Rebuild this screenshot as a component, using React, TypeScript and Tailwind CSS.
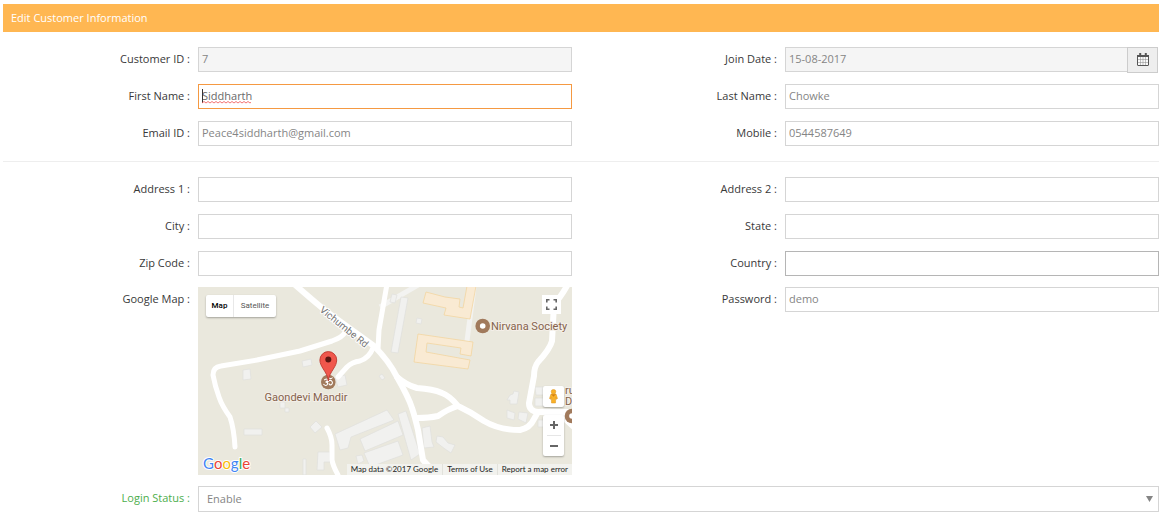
import React from "react";

const GRID = "grid grid-cols-[1fr_2fr_2px_1fr_2fr] items-start gap-x-2 gap-y-3";
const INPUT =
  "block h-[25px] w-full min-w-0 border border-[#d5d5d5] bg-white px-[3px] pb-0.5 text-[#858585] outline-none focus:border-[#f59942] focus:text-[#696969]";

function Label({ id, children, right, green }: { id: string; children: React.ReactNode; right?: boolean; green?: boolean }) {
  return (
    <label
      htmlFor={id}
      className={`h-[25px] text-right leading-[23px] whitespace-nowrap ${right ? "col-start-4" : "col-start-1"} ${green ? "text-[#4cae4c]" : "text-[#393939]"}`}
    >
      {children} :
    </label>
  );
}

function Field({ id, label, value = "", right, className = "", disabled }: {
  id: string; label: string; value?: string; right?: boolean; className?: string; disabled?: boolean;
}) {
  return (
    <>
      <Label id={id} right={right}>{label}</Label>
      <input id={id} type="text" defaultValue={value} readOnly={disabled} className={`${INPUT} ${disabled ? "bg-[#f5f5f5]!" : ""} ${className}`} />
    </>
  );
}

function CalendarIcon() {
  return (
    <svg width="12" height="13" viewBox="0 0 12 13" fill="none" stroke="#555" aria-hidden="true">
      <rect x="0.5" y="2.5" width="11" height="10" rx="0.5" fill="#fafafa" />
      <path d="M0 3h12" strokeWidth="2" />
      <path d="M3.2 0v3M8.8 0v3" strokeWidth="2" />
      <path d="M3.5 4v8M6 4v8M8.5 4v8M1 6.5h10M1 9.5h10" strokeWidth="0.5" stroke="#888" />
    </svg>
  );
}

function MapDrawing() {
  return (
    <svg className="absolute inset-0 h-full w-full" viewBox="0 0 374 188" preserveAspectRatio="xMidYMid slice" fontFamily="Roboto, sans-serif" aria-hidden="true">
      <rect width="374" height="188" fill="#eae8dd" />
      <path d="M182 20L220 -2M276 0L269 54" fill="none" stroke="#f3f3f1" strokeWidth="5" />
      <g fill="#f1f1ef" stroke="#e0e0dc" strokeWidth="0.7">
        <path d="M203 10l7 1-10 55-7-1zM194 7l5 1-2 8-5-1zM219 31l5 1-1 5-5-1z" />
        <path d="M104 74l9-2 1 6-9 2zM45 83l7-1 1 10-8 1zM82 115h5v6h-5zM87 121h4v4h-4zM46 142h18v6H46zM118 134l6 6-7 6-5-6zM137 90l10-2 2 10-9 2zM184 87l3 4-3 2-3-4z" />
        <path d="M137 147l52-24 7 10-43 17-3 11-8 2zM162 152l38-18 5 14-38 16zM166 166l34-12 5 14-33 12zM200 127l8-3 14 43-9 6zM158 169l6-1 2 6-6 3zM120 165h12v10h-6v8h-7zM105 172h3v16h-3zM224 141l8-2 2 16 2 5-10 1zM239 149l6 1 5 6 7 2-4 8-6-4-9-7z" />
        <path d="M312 108l3-1 1-3 5 1-2 12h-7v-4h-3zM309 123l8 3-1 7-7-2zM321 125l9 1-2 10-8-4zM337 100h9v8h-8zM337 111h10v8h-10zM340 133h6v7h-6z" />
      </g>
      <g fill="#f9ead3" stroke="#f3d5a1" strokeWidth="0.8">
        <path d="M228 5l19 5 15 2-1 8 4 1 4-22h9l-6 33-26-4 2-7-23-5zM220 47l55 8-2 14-11-2 1-6-34-5-1 9 44 8-2 9-54-7z" />
      </g>
      <g fill="none" stroke="#fff" strokeLinecap="round" strokeLinejoin="round">
        <path d="M95 -4Q112 11 129 25L176 59Q191 74 199 90Q211 111 214 121Q217 130 220 143L225 173Q230 179 239 187" strokeWidth="6" />
        <path d="M147 45Q145 50 134 54L102 64L59 73L23 79Q15 80 15 88Q17 99 21 110Q24 119 32 130Q36 142 37 160M189 -3L181 43L180 62M140 90L149 80Q154 75 162 74Q171 71 175 61M129 141Q134 150 134 158V173Q135 179 140 188" strokeWidth="5" />
        <path d="M199 90Q208 98 219 101Q235 102 244 106Q252 109 260 119Q273 125 286 134Q301 143 322 143Q332 141 336 132L340 125Q354 123 363 128L376 140M260 119Q250 122 240 129Q231 131 219 131M370 -3Q363 10 356 17L354 54Q352 62 340 75Q336 80 336 89L331 116Q331 124 340 125H376" strokeWidth="6" />
      </g>
      <g stroke="#fff" strokeWidth="2" paintOrder="stroke" strokeLinejoin="round">
        <text x="121" y="24" transform="rotate(39 121 24)" fill="#777" fontSize="10">Vichumbe Rd</text>
        <g fill="#85634c" fontSize="11" stroke="#f4efe8">
          <text x="108" y="114" textAnchor="middle">Gaondevi Mandir</text>
          <text x="293" y="43">Nirvana Society</text>
          <text x="367" y="107">ru</text>
          <text x="367" y="118">D</text>
        </g>
      </g>
      <g fill="#a17a5c">
        <circle cx="130.3" cy="95" r="7.3" />
        <circle cx="284.7" cy="39" r="7.3" />
        <circle cx="374" cy="129" r="7.3" />
      </g>
      <circle cx="284.7" cy="39" r="2.8" fill="#fff" />
      <circle cx="374" cy="129" r="2.8" fill="#fff" />
      <path d="M126.2 93q3-2 3.2 0q0 2-2 2q2.500 0 2.200 2q-1.500 3-4.200 0M129.500 95q2-2.500 4-1.200q2 2-.2 4q-2 .5-2.300-1.500M131 91q2 1.500 3.500-.5" fill="none" stroke="#fff" strokeWidth="1.1" />
      <path d="M130.300 94c-.5-5-2.500-8-5-12-2-3.200-3.400-5.700-3.400-9a8.400 8.400 0 0 1 16.800 0c0 3.300-1.400 5.800-3.400 9-2.500 4-4.500 7-5 12z" fill="#f0574c" stroke="#bd3a31" strokeWidth="0.9" />
      <circle cx="130.300" cy="72.500" r="3" fill="#5c1611" />
    </svg>
  );
}

function GoogleMap() {
  const shadow = "absolute rounded-xs bg-white shadow-[0_1px_2px_rgba(0,0,0,0.3)]";
  return (
    <div id="map" role="group" aria-label="Google Map" className="relative h-[188px] overflow-hidden font-[Roboto,sans-serif]">
      <MapDrawing />
      <div className={`${shadow} top-2 left-2 flex h-[22px] text-[8px]`}>
        <button type="button" className="w-7 border-r border-[#e8e8e8] font-medium text-black">Map</button>
        <button type="button" className="w-[42px] text-[#565656]">Satellite</button>
      </div>
      <button type="button" aria-label="Toggle fullscreen" className="absolute top-2 right-[11px] flex size-[19px] items-center justify-center bg-white">
        <svg width="11" height="11" viewBox="0 0 11 11" fill="none" stroke="#666" strokeWidth="1.600"><path d="M.8 3.500V.8h2.700M7.500.8h2.700v2.700M10.200 7.500v2.700H7.500M3.500 10.200H.8V7.500" /></svg>
      </button>
      <button type="button" aria-label="Street View" className={`${shadow} right-2 bottom-[68px] flex size-[21px] items-center justify-center`}>
        <svg width="9" height="15" viewBox="0 0 9 15" fill="#f9b127" stroke="#d9901a" strokeWidth="0.5"><path d="M2 5h5l1.500 4.500-1.200.8-.6-1.800L6.500 14h-4l-.2-5.500-.6 1.800-1.200-.8z" /><path d="M2.500 5.500h4L4.500 7.500z" fill="#d87b16" /><circle cx="4.500" cy="2.700" r="2.300" /></svg>
      </button>
      <div className={`${shadow} right-2 bottom-[19px] flex w-[21px] flex-col items-center`}>
        <button type="button" aria-label="Zoom in" className="flex h-5 w-full items-center justify-center"><svg width="8" height="8" viewBox="0 0 8 8" stroke="#666" strokeWidth="2"><path d="M0 4h8M4 0v8" /></svg></button>
        <div className="h-px w-3.5 bg-[#e6e6e6]" />
        <button type="button" aria-label="Zoom out" className="flex h-5 w-full items-center justify-center"><svg width="8" height="8" viewBox="0 0 8 8" stroke="#666" strokeWidth="2"><path d="M0 4h8" /></svg></button>
      </div>
      <svg className="absolute bottom-0 left-1" width="54" height="22" viewBox="0 0 54 22" aria-label="Google">
        <text x="1" y="16" fontFamily="Lato, sans-serif" fontSize="15" fontWeight="400" stroke="#fff" strokeWidth="2" strokeLinejoin="round" paintOrder="stroke">
          <tspan fill="#4285f4">G</tspan><tspan fill="#ea4335">o</tspan><tspan fill="#fbbc05">o</tspan><tspan fill="#4285f4">g</tspan><tspan fill="#34a853">l</tspan><tspan fill="#ea4335">e</tspan>
        </text>
      </svg>
      <div className="absolute right-0 bottom-0 flex h-[11px] bg-[#f2f2ee] font-[Lato,sans-serif] text-[8px] leading-[11px] whitespace-nowrap text-[#222]">
        <span className="px-1">Map data ©2017 Google</span>
        <a href="#terms" className="border-l border-[#e2e2dc] px-1">Terms of Use</a>
        <a href="#report" className="border-l border-[#e2e2dc] px-1">Report a map error</a>
      </div>
    </div>
  );
}

export default function App() {
  return (
    <main className="min-h-screen bg-white pt-1 pr-2 pl-[3px] font-['Open_Sans',sans-serif] text-[11px]">
      <h1 className="h-7 bg-[#ffb752] px-2 leading-7 text-white">Edit Customer Information</h1>
      <form onSubmit={(e) => e.preventDefault()}>
        <div className={`${GRID} mt-[15px]`}>
          <Field id="cid" label="Customer ID" value="7" disabled />
          <Label id="join" right>Join Date</Label>
          <div className="flex h-[25px] items-start pr-px">
            <input id="join" type="text" readOnly defaultValue="15-08-2017" className={`${INPUT} flex-1 bg-[#f5f5f5]!`} />
            <button type="button" aria-label="Pick a date" className="-ml-px flex h-[26px] w-[31px] shrink-0 items-center justify-center border border-[#ccc] bg-[#eee] pb-0.5"><CalendarIcon /></button>
          </div>
          <Label id="first">First Name</Label>
          <div className="relative">
            <input id="first" type="text" spellCheck={false} defaultValue="Siddharth" className={`${INPUT} border-[#f59942]! text-[#696969]!`} />
            <span className="absolute top-[5px] left-1 h-3.5 w-px bg-[#333]" />
            <svg className="pointer-events-none absolute top-[17px] left-1" width="49" height="3" aria-hidden="true">
              <defs><pattern id="squiggle" width="4" height="3" patternUnits="userSpaceOnUse"><path d="M0 2L2 .5L4 2" fill="none" stroke="#f05050" strokeWidth="0.8" /></pattern></defs>
              <rect width="49" height="3" fill="url(#squiggle)" />
            </svg>
          </div>
          <Field id="last" label="Last Name" value="Chowke" right />
          <Field id="email" label="Email ID" value="Peace4siddharth@gmail.com" />
          <Field id="mobile" label="Mobile" value="0544587649" right />
        </div>
        <hr className="mt-[15px] mb-[15px] border-[#eee]" />
        <div className={GRID}>
          <Field id="a1" label="Address 1" />
          <Field id="a2" label="Address 2" right />
          <Field id="city" label="City" />
          <Field id="state" label="State" right />
          <Field id="zip" label="Zip Code" />
          <Field id="country" label="Country" right className="border-[#b5b5b5]!" />
        </div>
        <div className={`${GRID} mt-[11px]`}>
          <Label id="map">Google Map</Label>
          <GoogleMap />
          <Field id="password" label="Password" value="demo" right />
        </div>
        <div className={`${GRID} mt-[11px]`}>
          <Label id="status" green>Login Status</Label>
          <div className="relative col-span-4">
            <select id="status" className="block h-[26px] w-full appearance-none border border-[#d5d5d5] bg-white px-2 text-[#858585] outline-none">
              <option>Enable</option>
              <option>Disable</option>
            </select>
            <svg className="pointer-events-none absolute top-[10px] right-[6px]" width="7" height="6" viewBox="0 0 7 6" fill="#858585" aria-hidden="true"><path d="M0 0h7L3.500 6z" /></svg>
          </div>
        </div>
      </form>
    </main>
  );
}
